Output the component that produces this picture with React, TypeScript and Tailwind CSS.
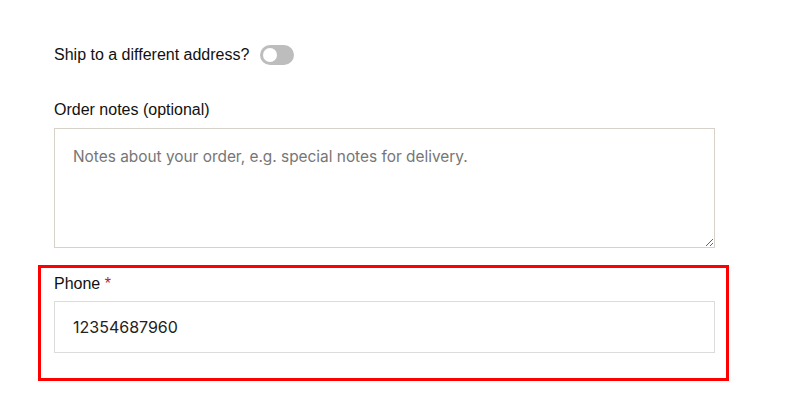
import React from 'react';

const App = () => {
  return (
    <div className="min-h-[405px] w-[803px] bg-white font-['Liberation_Sans',Arial,sans-serif] text-[16px] text-[#111]">
      <div className="w-[661px] pl-0 ml-[54px] pt-[42px]">
        {/* Ship toggle */}
        <div className="flex h-[24px] items-center leading-[24px]">
          <span className="pt-[1px]">Ship to a different address?</span>
          <span className="ml-[11px] mt-[1px] flex h-[20px] w-[34px] items-center rounded-full bg-[#bdbdbd] pl-[3px]">
            <span className="h-[14px] w-[14px] rounded-full bg-white" />
          </span>
        </div>

        {/* Order notes */}
        <div className="mt-[32px] leading-[24px]">Order notes (optional)</div>
        <textarea
          className="mt-[6px] block h-[120px] w-[661px] border border-[#d6d2c9] px-[18px] pt-[16px] pb-[10px] font-['Inter',sans-serif] text-[15.4px] leading-[24px] text-[#222] outline-none placeholder:text-[#767676]"
          placeholder="Notes about your order, e.g. special notes for delivery."
        />

        {/* Phone field, highlighted */}
        <div className="mt-[17px] -ml-[16px] w-[691px] border-[3px] border-[#f00] pl-[13px] pr-[11px] pt-[4px] pb-[25px]">
          <div className="leading-[24px]">
            Phone <span className="text-[#b22222]">*</span>
          </div>
          <input
            className="mt-[5px] block h-[52px] w-[661px] border border-[#dcdcdc] px-[18px] font-['Inter',sans-serif] text-[16px] text-[#222] outline-none"
            defaultValue="12354687960"
          />
        </div>
      </div>
    </div>
  );
};

export default App;
